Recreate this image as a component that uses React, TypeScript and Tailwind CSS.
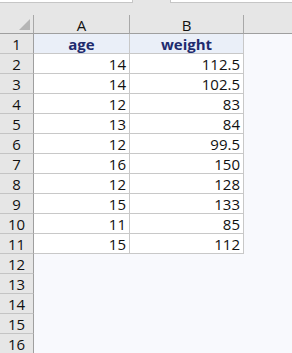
const rows: [number, number][] = [
  [14, 112.5],
  [14, 102.5],
  [12, 83],
  [13, 84],
  [12, 99.5],
  [16, 150],
  [12, 128],
  [15, 133],
  [11, 85],
  [15, 112],
];

const font = { fontFamily: '"Open Sans", "Noto Sans", Arial, sans-serif' };

function RowHead({ n }: { n: number }) {
  return (
    <div className="h-[20px] border-r border-b border-r-[#9f9f9f] border-b-[#c4c4c4] bg-[#e6e6e6] text-center text-[15px] leading-[21px] text-[#111]">
      {n}
    </div>
  );
}

export default function App() {
  return (
    <div
      className="h-[353px] w-[292px] overflow-hidden bg-[#f8f9fd]"
      style={font}
    >
      {/* formula bar remnants */}
      <div className="flex h-[15px] bg-[#e6e6e6]">
        <div className="h-[3px] w-[133px] border-r border-b border-[#c6c6c6] bg-white" />
        <div className="ml-[37px] h-[3px] flex-1 border-l border-b border-[#c6c6c6] bg-white" />
      </div>

      <div className="grid grid-cols-[34px_96px_114px_106px]">
        {/* column headers */}
        <div className="relative h-[19px] border-r border-b border-r-[#a8a8a8] border-b-[#9f9f9f] bg-[#e6e6e6]">
          <svg
            className="absolute right-[3px] bottom-[3px]"
            width="11"
            height="11"
            viewBox="0 0 11 11"
          >
            <polygon points="11,0 11,11 0,11" fill="#b5b5b5" />
          </svg>
        </div>
        {["A", "B", "C"].map((c) => (
          <div
            key={c}
            className="h-[19px] border-r border-b border-r-[#a8a8a8] border-b-[#9f9f9f] bg-[#e6e6e6] text-center text-[15px] leading-[21px] text-[#111]"
          >
            {c}
          </div>
        ))}

        {/* row 1 */}
        <RowHead n={1} />
        <div className="h-[20px] border-r border-b border-[#c8c8c8] bg-[#eaeff8] text-center text-[15px] leading-[20px] font-bold text-[#1e2b6e]">
          age
        </div>
        <div className="h-[20px] border-r border-b border-[#c8c8c8] bg-[#eaeff8] text-center text-[15px] leading-[20px] font-bold text-[#1e2b6e]">
          weight
        </div>
        <div className="h-[20px]" />

        {rows.map(([a, w], i) => (
          <div key={i} className="contents">
            <RowHead n={i + 2} />
            <div className="h-[20px] border-r border-b border-[#c8c8c8] bg-white pr-[3px] text-right text-[15px] leading-[21px] text-[#111]">
              {a}
            </div>
            <div className="h-[20px] border-r border-b border-[#c8c8c8] bg-white pr-[3px] text-right text-[15px] leading-[21px] text-[#111]">
              {w}
            </div>
            <div className="h-[20px]" />
          </div>
        ))}

        {[12, 13, 14, 15, 16].map((n) => (
          <div key={n} className="contents">
            <RowHead n={n} />
            <div className="col-span-3 h-[20px]" />
          </div>
        ))}
      </div>
    </div>
  );
}
